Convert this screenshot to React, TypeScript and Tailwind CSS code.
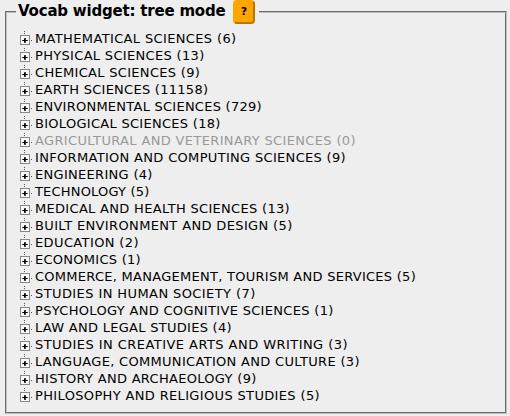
const subjects: { label: string; count: number; tracking: string }[] = [
  { label: "MATHEMATICAL SCIENCES", count: 6, tracking: "tracking-[0.36px]" },
  { label: "PHYSICAL SCIENCES", count: 13, tracking: "tracking-[0.32px]" },
  { label: "CHEMICAL SCIENCES", count: 9, tracking: "tracking-[0.31px]" },
  { label: "EARTH SCIENCES", count: 11158, tracking: "tracking-[0.27px]" },
  { label: "ENVIRONMENTAL SCIENCES", count: 729, tracking: "tracking-[0.25px]" },
  { label: "BIOLOGICAL SCIENCES", count: 18, tracking: "tracking-[0.29px]" },
  { label: "AGRICULTURAL AND VETERINARY SCIENCES", count: 0, tracking: "tracking-[0.35px]" },
  { label: "INFORMATION AND COMPUTING SCIENCES", count: 9, tracking: "tracking-[0.32px]" },
  { label: "ENGINEERING", count: 4, tracking: "tracking-[0.3px]" },
  { label: "TECHNOLOGY", count: 5, tracking: "tracking-[0.18px]" },
  { label: "MEDICAL AND HEALTH SCIENCES", count: 13, tracking: "tracking-[0.31px]" },
  { label: "BUILT ENVIRONMENT AND DESIGN", count: 5, tracking: "tracking-[0.36px]" },
  { label: "EDUCATION", count: 2, tracking: "tracking-[0.38px]" },
  { label: "ECONOMICS", count: 1, tracking: "tracking-[0.27px]" },
  { label: "COMMERCE, MANAGEMENT, TOURISM AND SERVICES", count: 5, tracking: "tracking-[0.27px]" },
  { label: "STUDIES IN HUMAN SOCIETY", count: 7, tracking: "tracking-[0.41px]" },
  { label: "PSYCHOLOGY AND COGNITIVE SCIENCES", count: 1, tracking: "tracking-[0.32px]" },
  { label: "LAW AND LEGAL STUDIES", count: 4, tracking: "tracking-[0.28px]" },
  { label: "STUDIES IN CREATIVE ARTS AND WRITING", count: 3, tracking: "tracking-[0.45px]" },
  { label: "LANGUAGE, COMMUNICATION AND CULTURE", count: 3, tracking: "tracking-[0.31px]" },
  { label: "HISTORY AND ARCHAEOLOGY", count: 9, tracking: "tracking-[0.3px]" },
  { label: "PHILOSOPHY AND RELIGIOUS STUDIES", count: 5, tracking: "tracking-[0.35px]" },
];

function ExpandIcon() {
  return (
    <svg width="12" height="17" viewBox="0 0 12 17" shapeRendering="crispEdges" className="shrink-0">
      <path d="M4 1h1v1h-1zM4 3h1v1h-1zM11 10h1v1h-1z" fill="#555" />
      <rect x="0.5" y="5.5" width="9" height="9" fill="#f8f8f8" stroke="#888" />
      <path d="M2 10h6v1h-6zM4 8h2v5h-2z" fill="#444" />
      <path d="M3 10h4v1h-4zM4 9h1v3h-1z" fill="#000" />
    </svg>
  );
}

export default function App() {
  return (
    <div className="h-[416px] w-[510px] overflow-hidden bg-[#eeeeee] pl-[5px] font-['DejaVu_Sans',Verdana,sans-serif] text-black">
      <fieldset className="h-[414px] w-[502px] border-2 border-[#c0c0c0] [border-style:groove] pl-[13px]">
        <legend className="-ml-[4px] flex h-6 items-center pr-1 whitespace-nowrap">
          <span className="w-[217px] pb-[2px] pl-[2px] text-[15px] font-bold tracking-[-0.2px]">Vocab widget: tree mode</span>
          <button className="h-6 w-[22px] rounded-[4px] border-2 border-[#ffa500] border-r-[#b87800] border-b-[#b87800] bg-[#ffa500] text-[11px] font-bold">?</button>
        </legend>
        <ul className="mt-[6px]">
          {subjects.map(({ label, count, tracking }) => (
            <li key={label} className={`flex h-[17px] items-center gap-[3px] text-[13px] whitespace-nowrap ${tracking} ${count ? "" : "text-[#999]"}`}>
              <ExpandIcon />
              <span>{label} ({count})</span>
            </li>
          ))}
        </ul>
      </fieldset>
    </div>
  );
}
